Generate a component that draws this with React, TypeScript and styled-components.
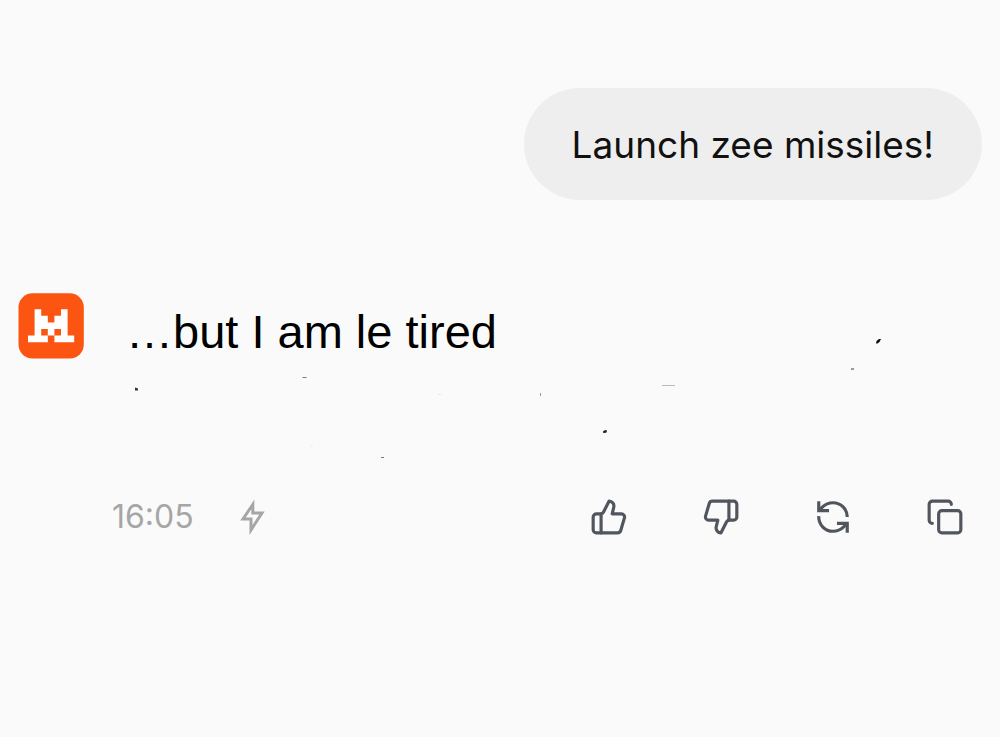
import React from "react";
import styled, { createGlobalStyle } from "styled-components";

const GlobalStyle = createGlobalStyle`
  *, *::before, *::after { box-sizing: border-box; }
  body {
    margin: 0;
    background: #fafafa;
    font-family: Inter, "Liberation Sans", sans-serif;
  }
`;

const Chat = styled.main`
  display: flex;
  flex-direction: column;
  min-height: 100vh;
  padding: 88px 18px 40px;
`;

const UserMessage = styled.p`
  align-self: flex-end;
  margin: 0;
  padding: 33px 48px 31px;
  border-radius: 56px;
  background: #eeeeee;
  color: #111111;
  font-size: 37px;
  line-height: 48px;
`;

const Reply = styled.article`
  position: relative;
  display: grid;
  grid-template-columns: 66px 1fr;
  column-gap: 28px;
  margin-top: 93px;
`;

const Logo = styled.svg`
  display: block;
  width: 66px;
  height: 66px;
`;

const ReplyText = styled.p`
  margin: 0;
  padding: 12px 14px 0;
  min-height: 186px;
  color: #000000;
  font-family: "Liberation Sans", Arial, sans-serif;
  font-size: 47px;
  line-height: 54px;
`;

const Footer = styled.footer`
  grid-column: 2;
  display: flex;
  align-items: center;
  justify-content: space-between;
  height: 76px;
  padding-right: 18px;
`;

const Meta = styled.div`
  display: flex;
  align-items: center;
  gap: 40px;
  color: #a6a6a6;
`;

const Time = styled.time`
  font-size: 32px;
  line-height: 40px;
`;

const Actions = styled.div`
  display: flex;
  gap: 74px;
`;

const ActionButton = styled.button`
  display: block;
  padding: 0;
  border: 0;
  background: none;
  color: #51555e;
  cursor: pointer;
`;

const Icon = styled.svg`
  display: block;
  width: 38px;
  height: 38px;
  fill: none;
  stroke: currentColor;
  stroke-width: 2;
  stroke-linecap: round;
  stroke-linejoin: round;
`;

const SharpIcon = styled(Icon)`
  stroke-linecap: butt;
  stroke-linejoin: miter;
`;

const BoltIcon = styled(SharpIcon)`
  stroke-width: 3;
`;

const Specks = styled.svg`
  position: absolute;
  top: 0;
  left: 0;
  pointer-events: none;
`;

function BrandLogo() {
  return (
    <Logo viewBox="0 0 66 66" role="img" aria-label="Assistant">
      <rect x="0.5" y="0.3" width="65.3" height="65.2" rx="14" fill="#fc5411" />
      <path
        fill="#ffffff"
        transform="translate(10 16.2) scale(6.6)"
        d="M1 0h1v1h1v1h1V1h1V0h1v4h1v1H4V4h1V3H4v1H3V3H2v1h1v1H0V4h1z"
      />
    </Logo>
  );
}

const actions = [
  {
    label: "Like",
    icon: (
      <Icon viewBox="0 0 24 24">
        <path d="M7 10v12" />
        <path d="M15 5.88 14 10h5.83a2 2 0 0 1 1.92 2.56l-2.33 8A2 2 0 0 1 17.5 22H4a2 2 0 0 1-2-2v-8a2 2 0 0 1 2-2h2.76a2 2 0 0 0 1.79-1.11L12 2a3.13 3.13 0 0 1 3 3.88Z" />
      </Icon>
    ),
  },
  {
    label: "Dislike",
    icon: (
      <Icon viewBox="0 0 24 24">
        <path d="M17 14V2" />
        <path d="M9 18.12 10 14H4.17a2 2 0 0 1-1.92-2.56l2.33-8A2 2 0 0 1 6.5 2H20a2 2 0 0 1 2 2v8a2 2 0 0 1-2 2h-2.76a2 2 0 0 0-1.79 1.11L12 22a3.13 3.13 0 0 1-3-3.88Z" />
      </Icon>
    ),
  },
  {
    label: "Regenerate",
    icon: (
      <SharpIcon viewBox="0 0 24 24">
        <path d="M21 12a9 9 0 0 0-9-9 9.75 9.75 0 0 0-6.74 2.74L3 8" />
        <path d="M3 2v6h6.500" />
        <path d="M3 11.500a9 9 0 0 0 9 9.500 9.750 9.750 0 0 0 6.740-2.740L21 16" />
        <path d="M14.500 16H21v6" />
      </SharpIcon>
    ),
  },
  {
    label: "Copy",
    icon: (
      <Icon viewBox="0 0 24 24">
        <rect x="8" y="8" width="14" height="14" rx="2" />
        <path d="M4 16c-1.1 0-2-.9-2-2V4c0-1.1.9-2 2-2h10c1.1 0 2 .9 2 2" />
      </Icon>
    ),
  },
];

export default function App() {
  return (
    <>
      <GlobalStyle />
      <Chat>
        <UserMessage>Launch zee missiles!</UserMessage>
        <Reply>
          <BrandLogo />
          <ReplyText>…but I am le tired</ReplyText>
          <Specks width="900" height="180" viewBox="0 0 900 180" aria-hidden="true">
            <path d="M117 94.500l3 1v2h-3z" fill="#333" />
            <path d="M284.500 84.500h4" stroke="#777" />
            <path d="M420 101.500h3" stroke="#e6e6e6" />
            <path d="M522.500 100v3" stroke="#999" />
            <path d="M292 153h3" stroke="#ececec" />
            <path d="M363 164.500h3" stroke="#777" />
            <path d="M644 92.500h13" stroke="#bbb" />
            <path d="M585 138.500l2-1.500 2 .5-.5 2-2 .5-1.500-.3z" fill="#222" />
            <path d="M833 76h3" stroke="#999" strokeWidth="2" />
            <path d="M858.500 48l2.500-2h2l-1.500 3-2 1.500h-1.500z" fill="#111" />
          </Specks>
          <Footer>
            <Meta>
              <Time dateTime="16:05">16:05</Time>
              <BoltIcon viewBox="0 0 38 38" role="img" aria-label="Fast reply">
                <path d="M18.800 6.500 9 21H17v11L28 15h-9.200z" />
              </BoltIcon>
            </Meta>
            <Actions>
              {actions.map(({ label, icon }) => (
                <ActionButton key={label} type="button" aria-label={label}>
                  {icon}
                </ActionButton>
              ))}
            </Actions>
          </Footer>
        </Reply>
      </Chat>
    </>
  );
}
